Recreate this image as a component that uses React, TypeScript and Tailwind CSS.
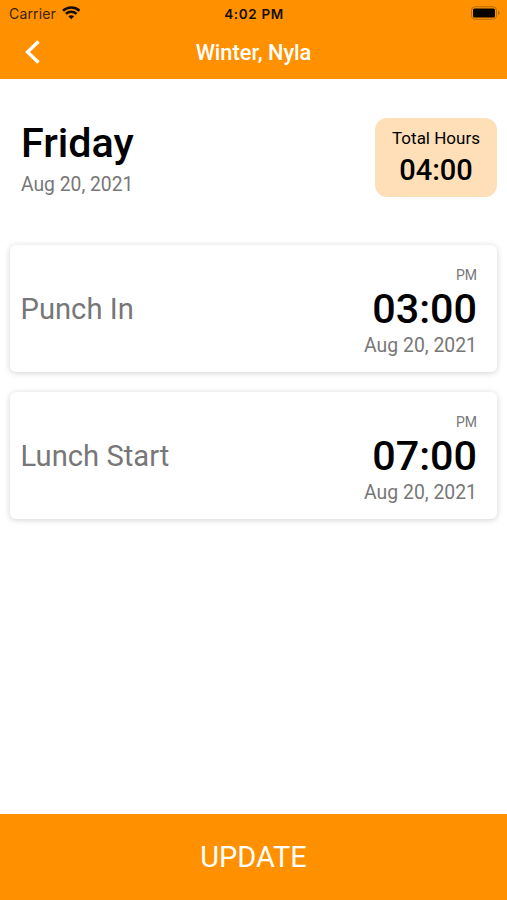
import React from "react";

function StatusBar() {
  return (
    <div className="flex h-[27px] items-center justify-between pl-[9px] pr-[7px] font-['Inter','Liberation_Sans',sans-serif] text-[#170d00]">
      <div className="flex w-[180px] items-center gap-[6px]">
        <span className="text-[14px] leading-[20px] tracking-[0.15px] text-[#3a2206]">Carrier</span>
        <svg className="mb-px" width="18.5" height="13.500" viewBox="0 0 18 13" fill="none" stroke="#170d00" strokeWidth="2.5">
          <path d="M1 4.600C5.500.400 12.500.400 17 4.600M3.800 7.600c2.900-2.700 7.500-2.700 10.400 0" />
          <path d="M6.200 9.900c1.600-1.400 4-1.400 5.600 0L9 12.800z" fill="#170d00" stroke="none" />
        </svg>
      </div>
      <span className="pt-px pr-px text-[13.5px] font-semibold tracking-[0.65px]">4:02 PM</span>
      <div className="flex w-[180px] justify-end pb-px">
        <svg width="30" height="14" viewBox="0 0 30 14">
          <rect x="1.5" y="0.75" width="25" height="12.500" rx="3.5" fill="none" stroke="#b56c0a" />
          <rect x="3" y="2.500" width="22" height="9" rx="1.5" fill="#080400" />
          <path d="M28 4.800c2.200.8 2.200 3.600 0 4.400z" fill="#b56c0a" />
        </svg>
      </div>
    </div>
  );
}

function PunchCard({ label, time }: { label: string; time: string }) {
  return (
    <section className="flex h-[127px] items-center justify-between rounded-[6px] bg-white pl-[10.5px] pr-[20px] shadow-[0_1px_6px_rgba(0,0,0,0.18)]">
      <h2 className="text-[29.2px] leading-[34px] text-[#777]">{label}</h2>
      <div className="flex flex-col items-end pt-[6px]">
        <span className="text-[14px] leading-[18px] text-[#777]">PM</span>
        <span className="text-[41.300px] font-medium leading-[50px] text-black">{time}</span>
        <span className="text-[19.400px] leading-[24px] text-[#777]">Aug 20, 2021</span>
      </div>
    </section>
  );
}

export default function App() {
  return (
    <div className="flex h-[900px] w-[507px] flex-col bg-white font-['Roboto',sans-serif]">
      <header className="h-[79px] bg-[#ff9100]">
        <StatusBar />
        <div className="flex h-[50px] items-center justify-between px-[25px] text-white">
          <svg width="16" height="24" viewBox="0 0 16 24" fill="none" stroke="white" strokeWidth="3.4">
            <path d="M13.500 1.500 2.500 12l11 10.500" />
          </svg>
          <h1 className="pt-[2px] text-[21.8px] font-medium">Winter, Nyla</h1>
          <span className="w-[16px]" />
        </div>
      </header>
      <main className="flex flex-1 flex-col px-[10px] pt-[39px]">
        <div className="flex h-[79px] items-start justify-between pl-[11px]">
          <div>
            <div className="text-[41.300px] font-medium leading-[50px]">Friday</div>
            <div className="text-[19.300px] leading-[33px] text-[#777]">Aug 20, 2021</div>
          </div>
          <div className="flex h-[79px] w-[122px] flex-col items-center rounded-[12px] bg-[#ffdfb7] pt-[8px]">
            <span className="text-[17px] leading-[24px]">Total Hours</span>
            <span className="text-[29px] font-medium leading-[40px]">04:00</span>
          </div>
        </div>
        <div className="mt-[48px] flex flex-col gap-[20px]">
          <PunchCard label="Punch In" time="03:00" />
          <PunchCard label="Lunch Start" time="07:00" />
        </div>
      </main>
      <button className="h-[86px] bg-[#ff9100] pt-[2px] text-[29px] text-white">UPDATE</button>
    </div>
  );
}
